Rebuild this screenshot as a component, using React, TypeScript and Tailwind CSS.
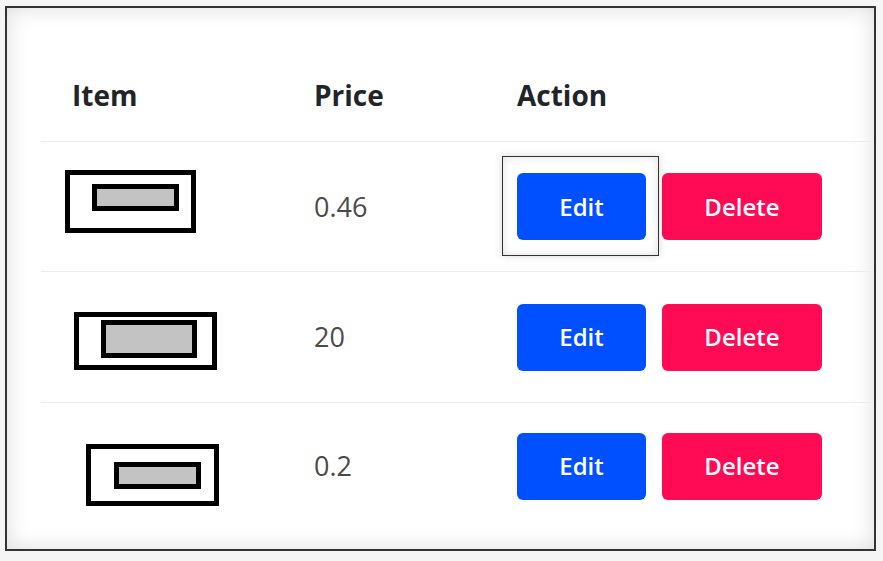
import React from "react";

type Row = {
  price: string;
  h: number;
  // placeholder picture geometry, measured off the product thumbnails
  img: { ml: number; mt: number; w: number; h: number; il: number; it: number; iw: number; ih: number };
  focused?: boolean;
};

const ROWS: Row[] = [
  { price: "0.46", h: 130, img: { ml: 24, mt: -10, w: 131, h: 63, il: 22, it: 9, iw: 87, ih: 27 }, focused: true },
  { price: "20", h: 131, img: { ml: 33, mt: 8, w: 143, h: 58, il: 22, it: 3, iw: 96, ih: 38 } },
  { price: "0.2", h: 127, img: { ml: 45, mt: 18, w: 133, h: 62, il: 23, it: 13, iw: 87, ih: 27 } },
];

function Thumb({ img }: { img: Row["img"] }) {
  return (
    <div
      className="border-[5px] border-black bg-white shrink-0"
      style={{ marginLeft: img.ml, marginTop: img.mt, width: img.w, height: img.h }}
    >
      <div
        className="border-[5px] border-black bg-[#c3c3c3]"
        style={{ marginLeft: img.il, marginTop: img.it, width: img.iw, height: img.ih }}
      />
    </div>
  );
}

export default function App() {
  return (
    <div
      className="w-[883px] h-[561px] bg-[#f5f5f5] pl-[5px] pt-[6px]"
      style={{ fontFamily: '"Open Sans", "Noto Sans", sans-serif' }}
    >
      <div className="w-[871px] h-[545px] border-2 border-[#333] bg-white shadow-[inset_0_0_22px_rgba(0,0,0,0.14)] pl-[34px]">
        {/* header */}
        <div className="grid grid-cols-[242px_203px_1fr] h-[133px] items-end pb-[27px] text-[28px] font-bold text-[#212529] leading-[38px]">
          <div className="pl-[31px]">Item</div>
          <div className="pl-[31px]">Price</div>
          <div className="pl-[31px]">Action</div>
        </div>

        {ROWS.map((row, i) => (
          <div
            key={i}
            className="grid grid-cols-[242px_203px_1fr] border-t border-[#e8ecf2] items-center"
            style={{ height: row.h }}
          >
            <div className="flex items-center">
              <Thumb img={row.img} />
            </div>
            <div className="pl-[31px] text-[27px] text-[#4a4a4a] leading-[36px]">{row.price}</div>
            <div className="pl-[31px] flex items-center gap-[16px]">
              <div className="relative">
                {row.focused && (
                  <div className="absolute -left-[15px] -top-[17px] -right-[13px] -bottom-[16px] border border-[#333] shadow-[inset_0_0_10px_rgba(0,0,0,0.12),0_0_8px_rgba(0,0,0,0.15)]" />
                )}
                <button className="relative w-[129px] h-[67px] rounded-[6px] bg-[#0050ff] text-white text-[24px] font-semibold">
                  Edit
                </button>
              </div>
              <button className="w-[160px] h-[67px] rounded-[6px] bg-[#ff0a54] text-white text-[24px] font-semibold">
                Delete
              </button>
            </div>
          </div>
        ))}
      </div>
    </div>
  );
}
